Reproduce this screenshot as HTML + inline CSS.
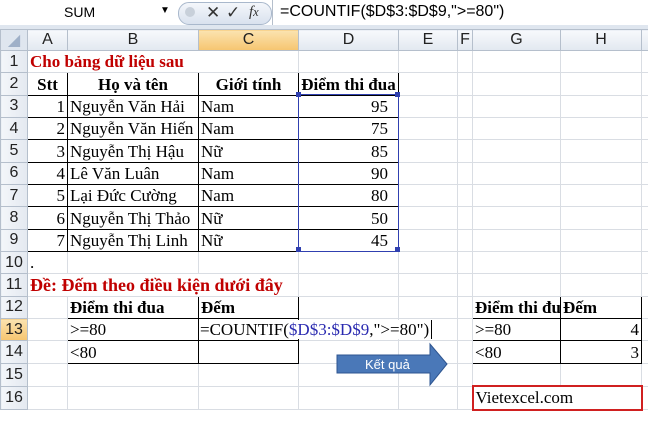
<!DOCTYPE html>
<html><head><meta charset="utf-8"><style>
body{margin:0;width:648px;height:421px;overflow:hidden;background:#fff;position:relative;font-family:"Liberation Serif",serif}
.fb{position:absolute;left:0;top:0;width:648px;height:25px;background:#fff;border-bottom:1px solid #9aa9bd}
.gap{position:absolute;left:0;top:25px;width:648px;height:4px;background:#dfe6ef}
.nb{position:absolute;left:0;top:0;width:170px;height:25px;font:14px "Liberation Sans",sans-serif;}
.pill{position:absolute;left:178px;top:2px;width:92px;height:21px;border-radius:11px;background:linear-gradient(#f4f7fb,#d9e2ee);border:1px solid #a9b8cc}
.fx{position:absolute;left:280px;top:3px;font:16px "Liberation Sans",sans-serif}
table{position:absolute;left:0;top:29px;border-collapse:collapse;table-layout:fixed;width:648px}
td{border:1px solid #d9dde3;height:21.35px;padding:0 2px;font-size:17px;white-space:nowrap;overflow:visible;line-height:19px}
tr.h td{background:linear-gradient(#f7f9fc,#e2e8f0);text-align:center;font:16px "Liberation Sans",sans-serif;color:#222;border-color:#b5bfcc;height:20px}
td.r{background:linear-gradient(90deg,#f3f6fa,#e4e9f0);text-align:center;font:16px "Liberation Sans",sans-serif;color:#222;border-color:#b5bfcc;padding:0}
td.sel{background:linear-gradient(#fbe3b0,#f6c570)!important}
.b{font-weight:bold}.c{text-align:center}.rt{text-align:right}
.red{color:#c00000;font-weight:bold;font-size:17px}
.k{border:1.5px solid #000}
.oh{overflow:hidden}
</style></head><body>
<div class="fb"></div><div class="gap"></div>
<div class="nb"><span style="position:absolute;left:64px;top:4px">SUM</span><span style="position:absolute;left:160px;top:5px;font-size:10px">▼</span></div>
<div class="pill"><span style="position:absolute;left:6px;top:4px;width:10px;height:10px;border-radius:5px;background:#c8d0da"></span><span style="position:absolute;left:27px;top:0;font:17px 'Liberation Sans',sans-serif;color:#333">✕</span><span style="position:absolute;left:47px;top:0;font:17px 'Liberation Sans',sans-serif;color:#333">✓</span><span style="position:absolute;left:70px;top:1px;font:italic 15px 'Liberation Serif',serif;color:#333">f<small>x</small></span></div>
<div style="position:absolute;left:272px;top:0;width:1px;height:25px;background:#b5bfcc"></div>
<div class="fx">=COUNTIF($D$3:$D$9,"&gt;=80")</div>
<table>
<colgroup><col style="width:27px"><col style="width:40px"><col style="width:131px"><col style="width:100px"><col style="width:100px"><col style="width:59px"><col style="width:15px"><col style="width:88px"><col style="width:81px"><col style="width:7px"></colgroup>
<tr class="h"><td style="background:#dfe6ef;color:#9fb0c8">◢</td><td>A</td><td>B</td><td class="sel">C</td><td>D</td><td>E</td><td>F</td><td>G</td><td>H</td><td></td></tr>
<tr><td class="r">1</td><td colspan="3" class="red" style="border-right-color:#d9dde3">Cho bảng dữ liệu sau</td><td></td><td></td><td></td><td></td><td></td><td></td></tr>
<tr><td class="r">2</td><td class="k b c oh">Stt</td><td class="k b c oh">Họ và tên</td><td class="k b c oh">Giới tính</td><td class="k b c oh" style="padding:0">Điểm thi đua</td><td></td><td></td><td></td><td></td><td></td></tr>
<tr><td class="r">3</td><td class="k rt">1</td><td class="k oh">Nguyễn Văn Hải</td><td class="k">Nam</td><td class="k rt" style="padding-right:10px">95</td><td></td><td></td><td></td><td></td><td></td></tr>
<tr><td class="r">4</td><td class="k rt">2</td><td class="k oh">Nguyễn Văn Hiến</td><td class="k">Nam</td><td class="k rt" style="padding-right:10px">75</td><td></td><td></td><td></td><td></td><td></td></tr>
<tr><td class="r">5</td><td class="k rt">3</td><td class="k oh">Nguyễn Thị Hậu</td><td class="k">Nữ</td><td class="k rt" style="padding-right:10px">85</td><td></td><td></td><td></td><td></td><td></td></tr>
<tr><td class="r">6</td><td class="k rt">4</td><td class="k oh">Lê Văn Luân</td><td class="k">Nam</td><td class="k rt" style="padding-right:10px">90</td><td></td><td></td><td></td><td></td><td></td></tr>
<tr><td class="r">7</td><td class="k rt">5</td><td class="k oh">Lại Đức Cường</td><td class="k">Nam</td><td class="k rt" style="padding-right:10px">80</td><td></td><td></td><td></td><td></td><td></td></tr>
<tr><td class="r">8</td><td class="k rt">6</td><td class="k oh">Nguyễn Thị Thảo</td><td class="k">Nữ</td><td class="k rt" style="padding-right:10px">50</td><td></td><td></td><td></td><td></td><td></td></tr>
<tr><td class="r">9</td><td class="k rt">7</td><td class="k oh">Nguyễn Thị Linh</td><td class="k">Nữ</td><td class="k rt" style="padding-right:10px">45</td><td></td><td></td><td></td><td></td><td></td></tr>
<tr><td class="r">10</td><td>.</td><td></td><td></td><td></td><td></td><td></td><td></td><td></td><td></td></tr>
<tr><td class="r">11</td><td colspan="3" class="red" style="font-size:18px">Đề: Đếm theo điều kiện dưới đây</td><td></td><td></td><td></td><td></td><td></td><td></td></tr>
<tr><td class="r">12</td><td></td><td class="k b oh">Điểm thi đua</td><td class="k b">Đếm</td><td></td><td></td><td></td><td class="k b oh">Điểm thi đua</td><td class="k b">Đếm</td><td></td></tr>
<tr><td class="r sel">13</td><td></td><td class="k">&gt;=80</td><td class="k" style="overflow:visible;position:relative"><span style="position:absolute;left:1px;top:1px;background:#fff;padding-right:2px;border-right:1px solid #000">=COUNTIF(<span style="color:#2a2ab0">$D$3:$D$9</span>,"&gt;=80")</span></td><td></td><td></td><td></td><td class="k">&gt;=80</td><td class="k rt">4</td><td></td></tr>
<tr><td class="r">14</td><td></td><td class="k">&lt;80</td><td class="k"></td><td></td><td></td><td></td><td class="k">&lt;80</td><td class="k rt">3</td><td></td></tr>
<tr><td class="r">15</td><td></td><td></td><td></td><td></td><td></td><td></td><td></td><td></td><td></td></tr>
<tr><td class="r">16</td><td></td><td></td><td></td><td></td><td></td><td></td><td colspan="2" class="oh" style="border:2px solid #d02020">Vietexcel.com</td><td></td></tr>
</table>
<div style="position:absolute;left:298px;top:94px;width:99px;height:156px;border:1px solid #3040b0;pointer-events:none"></div>
<div style="position:absolute;left:296px;top:92px;width:5px;height:5px;background:#3040b0"></div>
<div style="position:absolute;left:395px;top:92px;width:5px;height:5px;background:#3040b0"></div>
<div style="position:absolute;left:296px;top:247px;width:5px;height:5px;background:#3040b0"></div>
<div style="position:absolute;left:395px;top:247px;width:5px;height:5px;background:#3040b0"></div>
<svg style="position:absolute;left:0;top:0" width="648" height="421"><polygon points="337,355 430,355 430,344 447,364 430,385 430,373 337,373" fill="#4a78b8" stroke="#2e5590" stroke-width="1"/><text x="365" y="369" font-family="Liberation Sans,sans-serif" font-size="13" fill="#fff">Kết quả</text></svg>
</body></html>
